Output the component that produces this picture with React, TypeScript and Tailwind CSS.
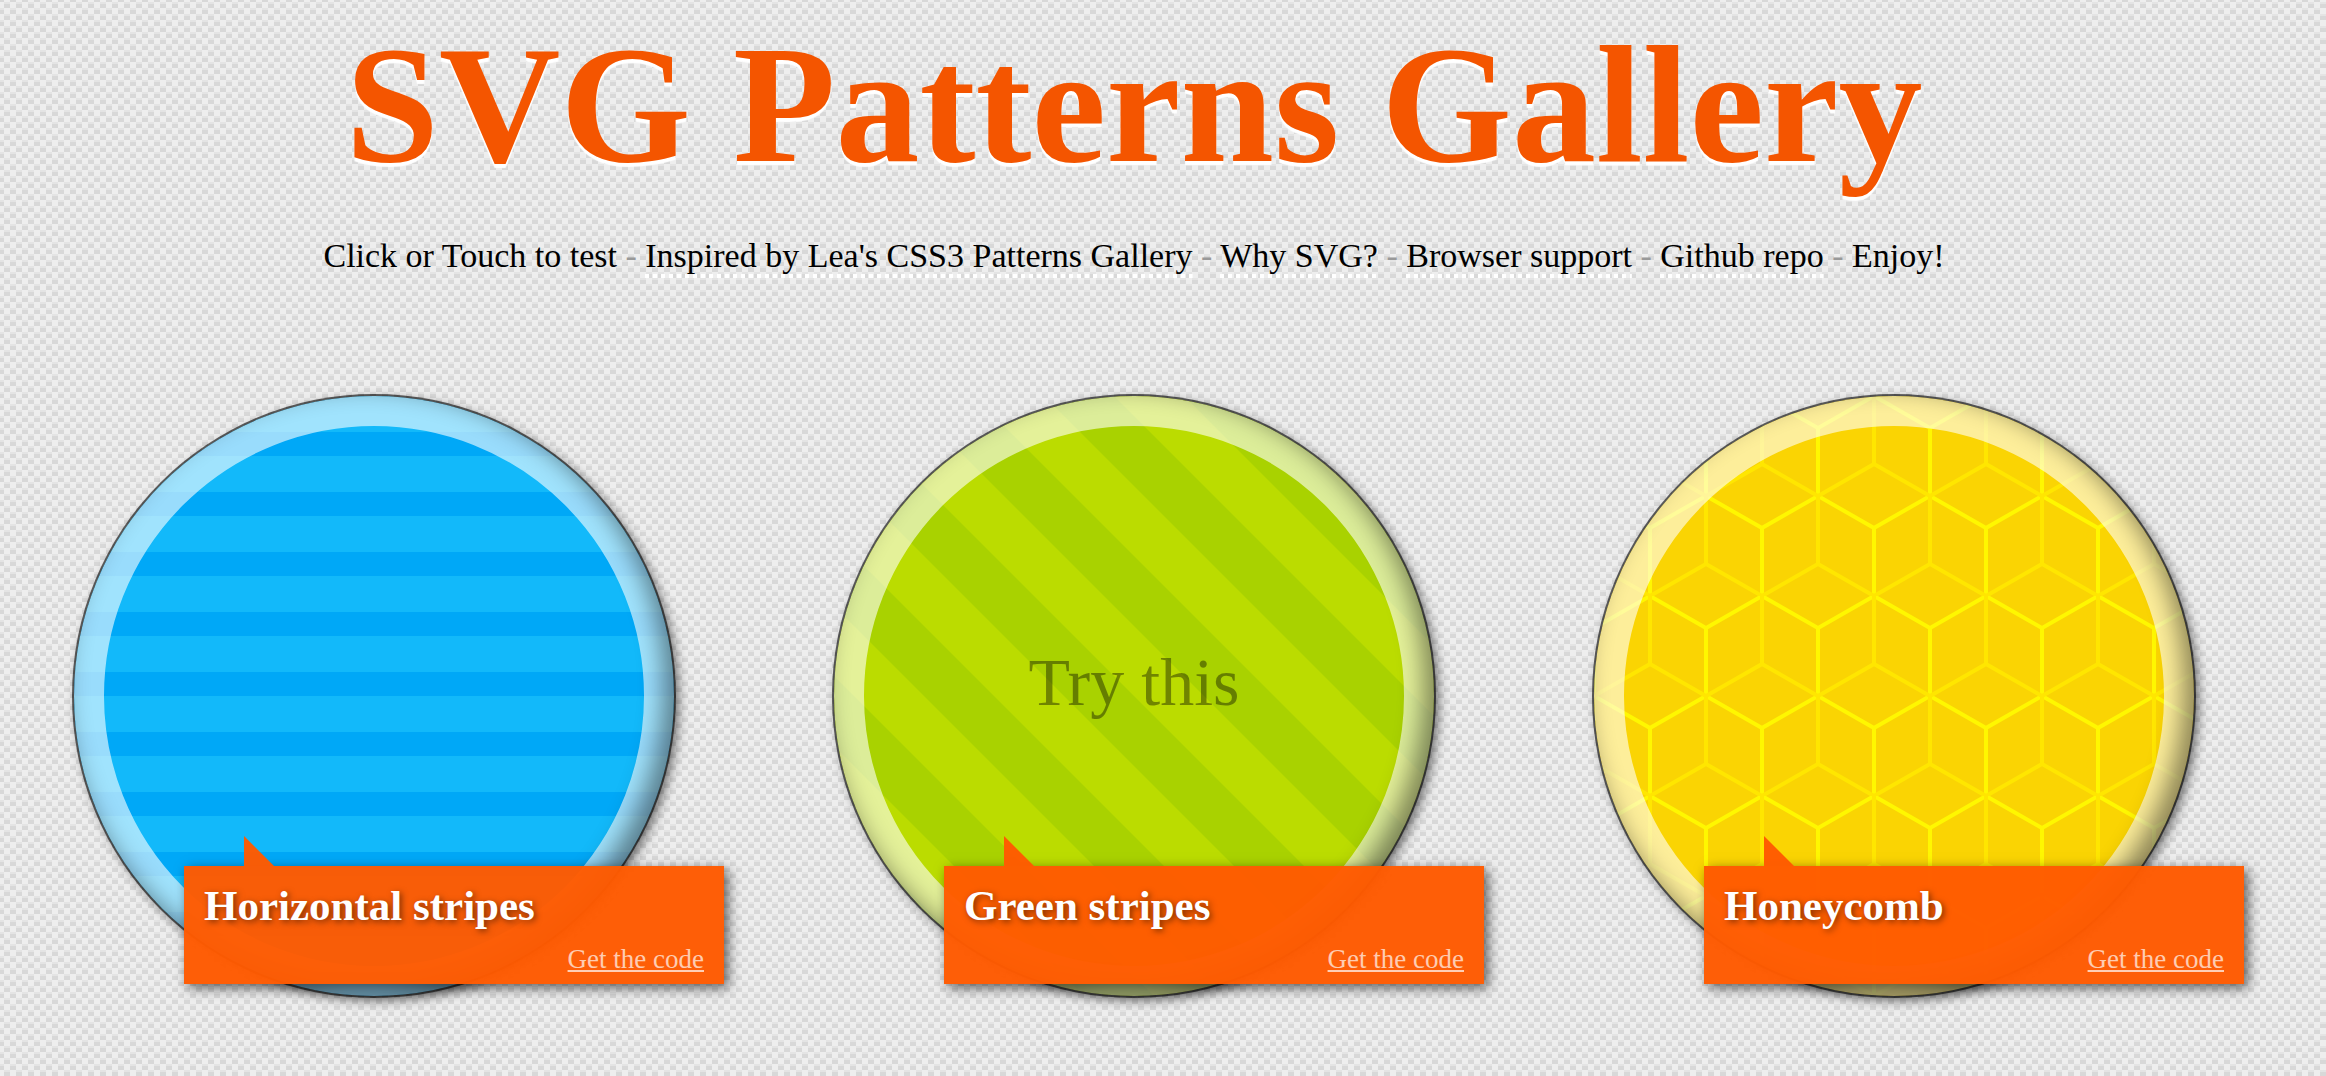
import React from "react";

const carbon =
  "bg-[#eee] bg-[image:conic-gradient(from_270deg_at_6px_2px,#e4e4e4_90deg,transparent_0),conic-gradient(from_270deg_at_6px_6px,#d8d8d8_90deg,transparent_0),conic-gradient(from_270deg_at_6px_2px,#e4e4e4_90deg,transparent_0),conic-gradient(from_270deg_at_6px_6px,#d8d8d8_90deg,transparent_0)] bg-[length:12px_12px] bg-[position:4px_2px,4px_2px,10px_8px,10px_8px]";

const links = [
  "Inspired by Lea's CSS3 Patterns Gallery",
  "Why SVG?",
  "Browser support",
  "Github repo",
];

function BlueTile() {
  return (
    <pattern id="blue" width="60" height="60" patternUnits="userSpaceOnUse">
      <rect width="60" height="60" fill="#12b9fa" />
      <rect y="36" width="60" height="24" fill="#00a8f7" />
    </pattern>
  );
}

function GreenTile() {
  return (
    <pattern id="green" width="140" height="140" patternUnits="userSpaceOnUse">
      <rect width="140" height="140" fill="#bbdc00" />
      <path d="M70 0H140V70ZM0 0L140 140H70L0 70Z" fill="#a9d200" />
    </pattern>
  );
}

function HoneyTile() {
  return (
    <pattern id="honey" width="112" height="200" patternUnits="userSpaceOnUse">
      <rect width="112" height="200" fill="#fad403" />
      <path
        d="M56 132L0 100L0 32L56 0L112 32L112 100L56 132L56 200"
        fill="none"
        stroke="#fff700"
        strokeWidth="4"
      />
      <path
        d="M56 0L56 68L0 100L0 168L56 200L112 168L112 100L56 68"
        fill="none"
        stroke="#ffe600"
        strokeWidth="4"
      />
    </pattern>
  );
}

const items = [
  { id: "blue", title: "Horizontal stripes", tile: <BlueTile /> },
  { id: "green", title: "Green stripes", tile: <GreenTile />, hint: "Try this" },
  { id: "honey", title: "Honeycomb", tile: <HoneyTile /> },
];

function Card({ id, title, tile, hint }: (typeof items)[number]) {
  return (
    <li className="relative size-[600px] shrink-0">
      <button
        type="button"
        aria-label={`Try ${title}`}
        className="relative flex size-full items-center justify-center overflow-hidden rounded-full"
      >
        <svg className="absolute inset-0 size-full" viewBox="0 0 600 600" aria-hidden="true">
          <defs>{tile}</defs>
          <rect width="600" height="600" fill={`url(#${id})`} />
        </svg>
        <span className="absolute inset-0 rounded-full border-[30px] border-white/60" />
        <span className="relative pb-7 text-[68px] leading-none text-black/40">{hint}</span>
      </button>
      <span className="pointer-events-none absolute inset-0 rounded-full shadow-[0_0_0_2px_rgba(0,0,0,0.6),4px_4px_12px_rgba(0,0,0,0.6),inset_-10px_-10px_24px_rgba(0,0,0,0.45)]" />
      <div className="absolute top-[470px] left-[110px] h-[118px] w-[540px] bg-[#ff5a00]/97 px-5 pt-4 shadow-[4px_4px_12px_rgba(0,0,0,0.6)]">
        <span className="absolute -top-[30px] left-[60px] size-[30px] bg-[#ff5a00]/97 [clip-path:polygon(0_0,100%_100%,0_100%)]" />
        <h2 className="text-[43px] leading-[48px] font-bold text-white [text-shadow:2px_2px_6px_rgba(0,0,0,0.5)]">
          {title}
        </h2>
        <p className="text-right text-[27px] leading-[58px]">
          <a href="#code" className="text-white/70 underline decoration-2 underline-offset-2">
            Get the code
          </a>
        </p>
      </div>
    </li>
  );
}

export default function App() {
  return (
    <div
      className={`min-h-screen overflow-hidden pr-[58px] font-[Palatino,'Palatino_Linotype',P052,'Liberation_Serif',serif] ${carbon}`}
    >
      <header className="text-center">
        <h1 className="pt-1 text-[168px] leading-[200px] font-bold whitespace-nowrap text-[#f45500] [text-shadow:0_4px_1px_#fff]">
          SVG Patterns Gallery
        </h1>
        <p className="pt-7 text-[34px] leading-[48px] whitespace-nowrap text-[#999]">
          <span className="text-black">Click or Touch to test</span>
          {links.map((text) => (
            <React.Fragment key={text}>
              {" - "}
              <a
                href="#info"
                className="bg-[repeating-linear-gradient(90deg,#fff_0_4px,transparent_4px_8px)] bg-[length:100%_4px] bg-bottom bg-no-repeat pb-1 text-black"
              >
                {text}
              </a>
            </React.Fragment>
          ))}
          {" - "}
          <span className="text-black">Enjoy!</span>
        </p>
      </header>
      <ul className="mt-29 flex justify-center gap-40">
        {items.map((item) => (
          <Card key={item.id} {...item} />
        ))}
      </ul>
    </div>
  );
}
